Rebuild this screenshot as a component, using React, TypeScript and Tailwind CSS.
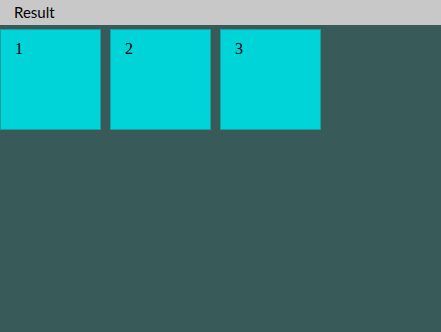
export default function App() {
  const boxes = ['1', '2', '3'];

  return (
    <div className="flex h-[332px] w-[441px] flex-col bg-[#385a59]">
      <div className="flex h-[25px] items-center bg-[#c8c8c8] px-[14px] font-['Lato',sans-serif] text-[15px] text-black">
        Result
      </div>
      <div className="mt-[4px] flex gap-[9px]">
        {boxes.map((n) => (
          <div
            key={n}
            className="h-[101px] w-[101px] border border-[#1b9e9f] bg-[#00d4d8] pl-[14px] pt-[7px] font-['Liberation_Serif',serif] text-[16px] text-black"
          >
            {n}
          </div>
        ))}
      </div>
    </div>
  );
}
